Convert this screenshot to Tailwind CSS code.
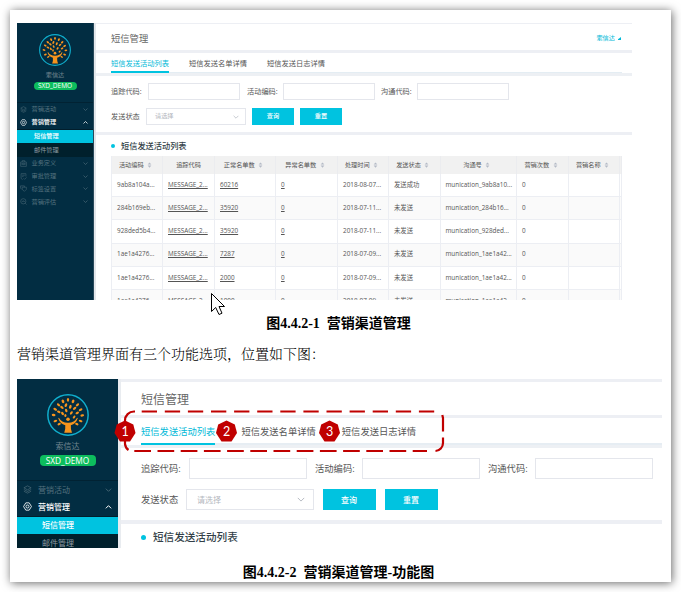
<!DOCTYPE html>
<html lang="zh-CN">
<head>
<meta charset="utf-8">
<title>营销渠道管理</title>
<script src="https://cdn.jsdelivr.net/npm/@tailwindcss/browser@4"></script>
</head>
<body class="w-[681px] h-[592px] overflow-hidden bg-white pt-[10px] pl-[10px] font-['Open_Sans','Noto_Sans_CJK_SC',sans-serif] leading-none">

<!-- shared icons -->
<svg class="hidden">
  <symbol id="tree" viewBox="0 0 40 40">
    <circle cx="20" cy="20" r="19.2" fill="none" stroke="#10aecd" stroke-width="1.4"/>
    <g fill="#f7941d">
      <circle cx="20" cy="24" r="1.7"/>
      <path d="M11.3 22.6 Q14 27.4 20 27.3 Q26 27.4 28.7 22.6 L29.3 23.2 Q27.6 28.6 22.7 29.8 Q22.4 33.5 23.8 37 H16.4 Q17.8 33.5 17.4 29.8 Q12.4 28.6 10.7 23.2Z"/>
      <ellipse cx="20" cy="5.5" rx="1.1" ry="1.8"/><ellipse cx="15.2" cy="7" rx="1.2" ry="1.8" transform="rotate(-25 15.2 7)"/><ellipse cx="24.8" cy="7" rx="1.2" ry="1.8" transform="rotate(25 24.8 7)"/>
      <ellipse cx="11" cy="10.3" rx="1.1" ry="1.8" transform="rotate(-50 11 10.3)"/><ellipse cx="29" cy="10.3" rx="1.1" ry="1.8" transform="rotate(50 29 10.3)"/>
      <ellipse cx="18" cy="10.6" rx="1.2" ry="1.9" transform="rotate(20 18 10.6)"/><ellipse cx="22.2" cy="12.2" rx="1.2" ry="1.9" transform="rotate(20 22.2 12.2)"/>
      <ellipse cx="14.2" cy="12.8" rx="1.1" ry="1.9" transform="rotate(-50 14.2 12.8)"/><ellipse cx="26.3" cy="13.6" rx="1.1" ry="1.9" transform="rotate(50 26.3 13.6)"/>
      <ellipse cx="7.8" cy="14.5" rx="1.1" ry="1.9" transform="rotate(-60 7.8 14.5)"/><ellipse cx="32" cy="15" rx="1.1" ry="1.9" transform="rotate(60 32 15)"/>
      <ellipse cx="18.3" cy="15.7" rx="1.1" ry="1.8" transform="rotate(-20 18.3 15.7)"/><ellipse cx="11.2" cy="17" rx="1.1" ry="1.8" transform="rotate(-60 11.2 17)"/>
      <ellipse cx="28.8" cy="18" rx="1.1" ry="1.8" transform="rotate(60 28.8 18)"/><ellipse cx="14.8" cy="18.6" rx="1.1" ry="1.8" transform="rotate(-35 14.8 18.6)"/>
      <ellipse cx="23.2" cy="18" rx="1.1" ry="1.8" transform="rotate(35 23.2 18)"/><ellipse cx="6.3" cy="20" rx="1.1" ry="1.8" transform="rotate(-80 6.3 20)"/>
      <ellipse cx="33.6" cy="20.4" rx="1.1" ry="1.8" transform="rotate(80 33.6 20.4)"/><ellipse cx="17.5" cy="20.5" rx="1" ry="1.5"/>
      <ellipse cx="8" cy="25.7" rx="1.1" ry="1.8" transform="rotate(70 8 25.7)"/><ellipse cx="32" cy="25.7" rx="1.1" ry="1.8" transform="rotate(-70 32 25.7)"/>
      <ellipse cx="11.6" cy="28.6" rx="1" ry="1.7" transform="rotate(60 11.6 28.6)"/><ellipse cx="28.4" cy="28.6" rx="1" ry="1.7" transform="rotate(-60 28.4 28.6)"/>
      <ellipse cx="25.8" cy="22" rx="1" ry="1.6" transform="rotate(40 25.8 22)"/>
    </g>
  </symbol>
  <symbol id="layers" viewBox="0 0 16 16"><path d="M8 1.5 14.5 5 8 8.5 1.5 5ZM1.5 8 8 11.5 14.5 8M1.5 11 8 14.5 14.5 11" fill="none" stroke="currentColor" stroke-width="1.1"/></symbol>
  <symbol id="gear" viewBox="0 0 16 16"><path d="M5 1.5h6L15 8l-4 6.5H5L1 8Z" fill="none" stroke="currentColor" stroke-width="1.5" stroke-linejoin="round"/><circle cx="8" cy="8" r="2.7" fill="none" stroke="currentColor" stroke-width="1.5"/></symbol>
  <symbol id="case" viewBox="0 0 16 16"><path d="M1.5 4.5h13v10h-13ZM5 4.5v-3h6v3M1.5 9h4.5M10 9h4.5M6 7.5h4v3H6Z" fill="none" stroke="currentColor" stroke-width="1.1"/></symbol>
  <symbol id="doc" viewBox="0 0 16 16"><path d="M13.5 8V1.5h-11v11L6 15M5 5h6M5 8h3M8 12l2.500 2.500L15 10" fill="none" stroke="currentColor" stroke-width="1.1"/></symbol>
  <symbol id="tag" viewBox="0 0 16 16"><path d="M1 2h9v3M1 2v5l3 3M5 5h9.500v5L10 14.500 5 10Z" fill="none" stroke="currentColor" stroke-width="1.1"/></symbol>
  <symbol id="search" viewBox="0 0 16 16"><circle cx="7.500" cy="7.500" r="6" fill="none" stroke="currentColor" stroke-width="1.1"/><path d="M12 12l3 3M4 8h2l1.500-2L9 9l2-2" fill="none" stroke="currentColor" stroke-width="1.1"/></symbol>
  <symbol id="down" viewBox="0 0 10 6"><path d="M1 1l4 4 4-4" fill="none" stroke="currentColor" stroke-width="1.200"/></symbol>
  <symbol id="up" viewBox="0 0 10 6"><path d="M1 5l4-4 4 4" fill="none" stroke="currentColor" stroke-width="1.500"/></symbol>
  <symbol id="sort" viewBox="0 0 6 8"><path d="M3 .5 5.500 3.300H.5ZM3 7.500.5 4.700h5Z" fill="#b4bac6"/></symbol>
</svg>

<main class="relative w-[661px] h-[572px] bg-white shadow-[1px_1px_9px_rgba(0,0,0,0.6)] pl-[7px] pt-[13px]">

  <!-- figure 1 -->
  <section class="flex w-[615px] h-[277px] overflow-hidden text-[6.200px]">
    <aside class="w-[77px] shrink-0 bg-[#022d42] text-[#55727f] border-r border-[#28495a]">
      <div class="flex flex-col items-center h-[79.500px] pt-[11px] border-b border-[#012233]">
        <svg class="w-8 h-8"><use href="#tree"/></svg>
        <div class="mt-[5px] h-[7px] leading-[7px] text-[#71858f]">索信达</div>
        <div class="mt-[4px] w-[43px] h-[8px] rounded-[4px] bg-[#0dbd5d] text-white text-center text-[6.500px] leading-[8px]">SXD_DEMO</div>
      </div>
      <div class="flex items-center h-[13px] pt-[1px] pl-[3px] pr-[5px]"><svg class="w-[7px] h-[7px] mr-[4.500px]"><use href="#layers"/></svg><span class="flex-1">营销活动</span><svg class="w-[5px] h-[3px]"><use href="#down"/></svg></div>
      <div class="flex items-center h-[14px] pl-[3px] pr-[5px] text-white font-medium border-b border-[#011e2c]"><svg class="w-[7px] h-[7px] mr-[4.500px]"><use href="#gear"/></svg><span class="flex-1">营销管理</span><svg class="w-[5px] h-[3px]"><use href="#up"/></svg></div>
      <div class="flex items-center h-[13px] pl-[17px] bg-[#00c3e0] text-white font-medium">短信管理</div>
      <div class="flex items-center h-[14.500px] pt-[1px] pl-[17px] bg-[#00202c] text-[#8f9ca2]">邮件管理</div>
      <div class="flex items-center h-[12.800px] pl-[3px] pr-[5px]"><svg class="w-[7px] h-[7px] mr-[4.500px]"><use href="#case"/></svg><span class="flex-1">业务定义</span><svg class="w-[5px] h-[3px]"><use href="#down"/></svg></div>
      <div class="flex items-center h-[12.800px] pl-[3px] pr-[5px]"><svg class="w-[7px] h-[7px] mr-[4.500px]"><use href="#doc"/></svg><span class="flex-1">审批管理</span><svg class="w-[5px] h-[3px]"><use href="#down"/></svg></div>
      <div class="flex items-center h-[12.800px] pl-[3px] pr-[5px]"><svg class="w-[7px] h-[7px] mr-[4.500px]"><use href="#tag"/></svg><span class="flex-1">标签设置</span><svg class="w-[5px] h-[3px]"><use href="#down"/></svg></div>
      <div class="flex items-center h-[12.800px] pl-[3px] pr-[5px]"><svg class="w-[7px] h-[7px] mr-[4.500px]"><use href="#search"/></svg><span class="flex-1">营销评估</span><svg class="w-[5px] h-[3px]"><use href="#down"/></svg></div>
    </aside>
    <div class="w-[538px] shrink-0 border-l-2 border-[#e3e7eb] text-[#555]">
      <div class="flex items-center justify-between h-[30px] border-t border-b-[3px] border-[#edeff4] pl-[15px] pr-[11px]">
        <h1 class="text-[9.300px] text-[#666] pt-[3px]">短信管理</h1>
        <div class="flex items-center text-[#00b9d8] pt-[3px]">索信达<svg class="ml-[3px] w-[3px] h-[3px]" viewBox="0 0 4 4"><path d="M4 0v4H0V3Z" fill="#00b9d8"/></svg></div>
      </div>
      <div class="h-[23px] border-b-[3px] border-[#edf0f4] pl-[15px] pr-[10px]">
        <nav class="flex gap-[20px] h-[20px] border-b border-[#e4edf3] text-[7.250px]">
          <span class="h-[20px] pt-[7px] text-[#00b9d8] border-b-2 border-[#00c3e0]">短信发送活动列表</span>
          <span class="pt-[7px]">短信发送名单详情</span>
          <span class="pt-[7px]">短信发送日志详情</span>
        </nav>
      </div>
      <div class="h-[59px] border-b-[3px] border-[#edeff4] pl-[15px] pt-[7px] text-[7.200px]">
        <div class="flex items-center h-[17px]">
          <span class="w-[37px] pt-[1px]">追踪代码:</span><span class="w-[92px] h-[17px] border border-[#e4e6ec] mr-[7px]"></span>
          <span class="w-[36px] pt-[1px]">活动编码:</span><span class="w-[92px] h-[17px] border border-[#e4e6ec] mr-[6px]"></span>
          <span class="w-[36px] pt-[1px]">沟通代码:</span><span class="w-[92px] h-[17px] border border-[#e4e6ec]"></span>
        </div>
        <div class="flex items-center h-[17px] mt-[8px]">
          <span class="w-[35px]">发送状态</span>
          <span class="flex items-center justify-between w-[100px] h-[17px] border border-[#e4e6ec] pl-[8px] pr-[6px] mr-[6px] text-[6.200px] text-[#b4b8c0]">请选择<svg class="w-[6px] h-[4px]"><use href="#down"/></svg></span>
          <button class="w-[42px] h-[17px] bg-[#00c3e0] text-white text-[6.200px] font-medium mr-[6px]">查询</button>
          <button class="w-[42px] h-[17px] bg-[#00c3e0] text-white text-[6.200px] font-medium">重置</button>
        </div>
      </div>
      <div class="pl-[15px]">
        <h2 class="flex items-center h-[21px] pt-px text-[8.200px] font-medium text-[#333f48]"><i class="w-[4px] h-[4px] rounded-full bg-[#00c3e0] mr-[6px]"></i>短信发送活动列表</h2>
        <div id="grid" class="w-[511px] border-l border-[#eceef3]"></div>
      </div>
    </div>
  </section>

  <p class="w-[643px] mt-[16px] h-[16px] text-center leading-4 text-[14px] font-bold text-black whitespace-pre font-['Liberation_Serif','Noto_Sans_CJK_SC',serif]">图4.4.2-1  营销渠道管理</p>
  <p class="mt-[13px] h-[16px] leading-4 text-[14px] text-black font-['Noto_Serif_CJK_SC','Noto_Sans_CJK_SC',serif] font-light">营销渠道管理界面有三个功能选项，位置如下图：</p>

  <!-- figure 2 -->
  <section class="relative flex w-[645px] h-[169px] mt-[18px] text-[8px]">
    <aside class="w-[101px] h-[169px] overflow-hidden shrink-0 bg-[#022d42] text-[#55727f]">
      <div class="flex flex-col items-center h-[102px] pt-[15px] border-b border-[#012233]">
        <svg class="w-[42px] h-[42px]"><use href="#tree"/></svg>
        <div class="mt-[5px] h-[9px] leading-[9px] text-[#71858f]">索信达</div>
        <div class="mt-[5px] w-[56px] h-[11px] rounded-[4px] bg-[#0dbd5d] text-white text-center text-[8.300px] leading-[11px]">SXD_DEMO</div>
      </div>
      <div class="flex items-center h-[17px] pl-[6px] pr-[6px]"><svg class="w-[9px] h-[9px] mr-[6px]"><use href="#layers"/></svg><span class="flex-1">营销活动</span><svg class="w-[7px] h-[4px]"><use href="#down"/></svg></div>
      <div class="flex items-center h-[19px] pb-[1px] pl-[6px] pr-[6px] text-white font-medium border-b border-[#011e2c]"><svg class="w-[9px] h-[9px] mr-[6px]"><use href="#gear"/></svg><span class="flex-1">营销管理</span><svg class="w-[7px] h-[4px]"><use href="#up"/></svg></div>
      <div class="flex items-center h-[17px] pb-px pl-[25px] bg-[#00c3e0] text-white font-medium">短信管理</div>
      <div class="h-[18px] pt-[5px] pl-[25px] bg-[#00202c] text-[#8f9ca2]">邮件管理</div>
    </aside>
    <div class="w-[544px] shrink-0 text-[#555] border-l-[3px] border-[#e9ecf0]">
      <div class="flex items-center h-[39px] border-y-[3px] border-[#edeff4] pl-[20px] text-[12px] text-[#666] pt-[2px]">短信管理</div>
      <div class="h-[30px] border-b-[3px] border-[#edf0f4] pl-[20px]">
        <nav class="flex gap-[26px] h-[27px] border-b-2 border-[#e6edf3] text-[9.300px]">
          <span class="h-[27px] pt-[9px] text-[#00b9d8] border-b-2 border-[#00c3e0]">短信发送活动列表</span>
          <span class="pt-[9px]">短信发送名单详情</span>
          <span class="pt-[9px]">短信发送日志详情</span>
        </nav>
      </div>
      <div class="h-[76px] border-b-[4px] border-[#edeff4] pl-[20px] pt-[10px] text-[9.300px]">
        <div class="flex items-center h-[21px]">
          <span class="w-[48px]">追踪代码:</span><span class="w-[118px] h-[21px] border border-[#e4e6ec] mr-[8px]"></span>
          <span class="w-[47px]">活动编码:</span><span class="w-[118px] h-[21px] border border-[#e4e6ec] mr-[8px]"></span>
          <span class="w-[47px]">沟通代码:</span><span class="w-[118px] h-[21px] border border-[#e4e6ec]"></span>
        </div>
        <div class="flex items-center h-[21px] mt-[10px]">
          <span class="w-[45px]">发送状态</span>
          <span class="flex items-center justify-between w-[128px] h-[21px] border border-[#e4e6ec] pl-[10px] pr-[8px] mr-[8.500px] text-[8px] text-[#b4b8c0]">请选择<svg class="w-[8px] h-[5px]"><use href="#down"/></svg></span>
          <button class="w-[53px] h-[21px] bg-[#00c3e0] text-white text-[8px] font-medium mr-[9px]">查询</button>
          <button class="w-[53px] h-[21px] bg-[#00c3e0] text-white text-[8px] font-medium">重置</button>
        </div>
      </div>
      <h2 class="flex items-center h-[24px] pt-[3px] pl-[20px] text-[10.600px] font-medium text-[#333f48]"><i class="w-[5px] h-[5px] rounded-full bg-[#00c3e0] mr-[7px]"></i>短信发送活动列表</h2>
    </div>

    <!-- callouts over the tabs -->
    <svg class="absolute left-[93px] top-[27px] w-[340px] h-[50px]" viewBox="0 0 340 50">
      <g fill="none" stroke="#c00000" stroke-width="2.2">
        <path d="M31.700 5.500H324.500" stroke-dasharray="15.300 7.800"/>
        <path d="M24.300 45H317" stroke-dasharray="16.700 6.500"/>
        <path d="M15 17v-2.500a9 9 0 0 1 9-9h1M332.300 9l.7 3V25.500M333 31.500V37a8 8 0 0 1-7.500 8M15 34v4q.5 4 3.500 6"/>
      </g>
      <g fill="#c00000">
        <path id="hept" d="M15 14.500 23.300 18.500 25.500 27 20 35.500H10L4.500 27 6.700 18.500Z"/>
        <use href="#hept" x="101.500"/><use href="#hept" x="204.500"/>
      </g>
      <g fill="#fff" font-family="Lato, sans-serif" font-size="12.500" text-anchor="middle"><text x="15" y="29.500">1</text><text x="116.500" y="29.500">2</text><text x="219.500" y="29.500">3</text></g>
    </svg>
  </section>

  <p class="w-[643px] mt-[17px] h-[16px] text-center leading-4 text-[14px] font-bold text-black whitespace-pre font-['Liberation_Serif','Noto_Sans_CJK_SC',serif]">图4.4.2-2  营销渠道管理-功能图</p>

  <!-- mouse pointer -->
  <svg class="absolute left-[201px] top-[283px] w-[15px] h-[23px]" viewBox="0 0 15 23"><path d="M.5.500V18.500L4.700 14.500 8 21.500 11 20.200 8 13.500H13.500Z" fill="#fff" stroke="#000"/></svg>
</main>

<script>
  const cols = [51, 52, 61, 62, 51, 51.5, 76.5, 52, 51, 2];
  const heads = ['活动编码', '追踪代码', '正常名单数', '异常名单数', '处理时间', '发送状态', '沟通号', '营销次数', '营销名称', ''];
  const rows = [
    ['9ab8a104a...', '60216', '2018-08-07...', '发送成功', '9ab8a10...'],
    ['284b169eb...', '35920', '2018-07-11...', '未发送', '284b16...'],
    ['928ded5b4...', '35920', '2018-07-11...', '未发送', '928ded...'],
    ['1ae1a4276...', '7287', '2018-07-09...', '未发送', '1ae1a42...'],
    ['1ae1a4276...', '2000', '2018-07-09...', '未发送', '1ae1a42...'],
    ['1ae1a4276...', '1000', '2018-07-09...', '未发送', '1ae1a42...'],
  ];
  const sort = '<svg class="w-[5px] h-[6px] ml-[3.500px]"><use href="#sort"/></svg>';
  let html = '<div class="flex h-[18px] bg-[#f1f1f1] text-[6.200px]">' + heads.map((h, i) =>
    `<div class="flex items-center justify-center shrink-0 border-r border-[#ebecef] ${h && i !== 1 ? 'pr-[3px]' : ''}" style="width:${cols[i]}px">${h}${h && i !== 1 ? sort : ''}</div>`).join('') + '</div>';
  rows.forEach((r, n) => {
    const cells = [r[0], '<u>MESSAGE_2...</u>', `<u>${r[1]}</u>`, '<u>0</u>', r[2], r[3], 'munication_' + r[4], '0', '', ''];
    html += `<div class="flex h-[23.200px] border-b border-[#eceef3] text-[6.350px] ${n % 2 ? 'bg-[#fafafa]' : ''}">` + cells.map((c, i) =>
      `<div class="flex items-center shrink-0 border-r border-[#eceef3] whitespace-nowrap ${c ? 'pl-[5px]' : ''}" style="width:${cols[i]}px">${c}</div>`).join('') + '</div>';
  });
  document.getElementById('grid').innerHTML = html;
</script>
</body>
</html>
